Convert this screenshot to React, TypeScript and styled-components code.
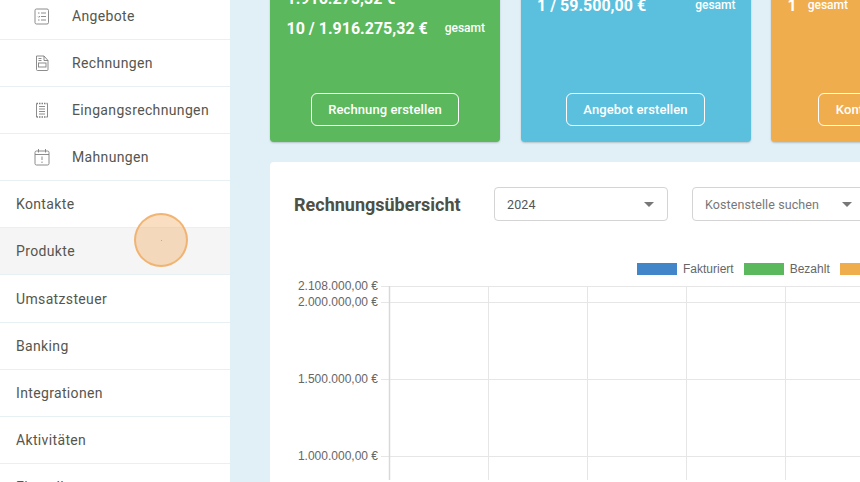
import React from 'react';
import styled, { createGlobalStyle } from 'styled-components';

const GlobalStyle = createGlobalStyle`
  html, body {
    margin: 0;
    padding: 0;
    overflow: hidden;
    background: #e1f0f7;
    font-family: Roboto, 'Liberation Sans', sans-serif;
  }
`;

const iconProps = {
  width: 18,
  height: 18,
  viewBox: '0 0 18 18',
  fill: 'none',
  stroke: '#808080',
  strokeWidth: 0.9,
};

const OffersIcon = () => (
  <svg {...iconProps}>
    <rect x="2" y="2" width="13.500" height="15" rx="1.500" />
    <path d="M5 6h1.500M8 6h5M5 9.500l.8.8L7 9M8 9.500h5M5 13h1.500M8 13h5" />
  </svg>
);

const InvoiceIcon = () => (
  <svg {...iconProps}>
    <path d="M3.500 2h7.500l4 4.500v9a1 1 0 0 1-1 1H4.500a1 1 0 0 1-1-1z" />
    <path d="M11 2v4.500h4M5.500 4.500h3M5.500 6.500h3" />
    <rect x="5.500" y="9" width="7.500" height="4" />
  </svg>
);

const IncomingIcon = () => (
  <svg {...iconProps}>
    <path
      d="M3.500 2.500h11M3.500 16h11"
      strokeDasharray="1.500 1"
      strokeWidth="1.400"
    />
    <path d="M3.500 2.500v13.500M14.500 2.500v13.500M6 5.500h6M6 8h6M6 10.500h6M6 13h6" />
  </svg>
);

const ReminderIcon = () => (
  <svg {...iconProps}>
    <rect x="2" y="3" width="14" height="14" rx="1.500" />
    <path d="M2 6.500h14M5.500 1v3.500M12.500 1v3.500M9 8.500v3.500M9 13.500v1.500" />
  </svg>
);

const subItems = [
  { label: 'Angebote', icon: <OffersIcon /> },
  { label: 'Rechnungen', icon: <InvoiceIcon /> },
  { label: 'Eingangsrechnungen', icon: <IncomingIcon /> },
  { label: 'Mahnungen', icon: <ReminderIcon /> },
];

const mainItems = ['Kontakte', 'Produkte', 'Umsatzsteuer', 'Banking', 'Integrationen', 'Aktivitäten'];

const yTicks = [
  { label: '2.108.000,00 €', y: 26.500 },
  { label: '2.000.000,00 €', y: 42.500 },
  { label: '1.500.000,00 €', y: 119.500 },
  { label: '1.000.000,00 €', y: 196.500 },
];

const xGrid = [119.500, 218.500, 317.500, 416.500, 515.500];

const App = () => {
  return (
    <Page>
      <GlobalStyle />
      <Sidebar>
        {subItems.map((oItem) => (
          <NavRow key={oItem.label} $sub>
            <NavIcon>{oItem.icon}</NavIcon>
            {oItem.label}
          </NavRow>
        ))}
        {mainItems.map((sItem) => (
          <NavRow key={sItem} $active={sItem === 'Produkte'}>
            {sItem}
          </NavRow>
        ))}
        <NavRow>
          Einstellungen
          <Chevron />
        </NavRow>
      </Sidebar>

      <Main>
        <Cards>
          <Card $color="#5cb85c">
            <Stats $top={13}>
              <StatRow>
                <Amount>1.916.275,32 €</Amount>
              </StatRow>
              <StatRow>
                <Amount>10 / 1.916.275,32 €</Amount>
                <Unit>gesamt</Unit>
              </StatRow>
            </Stats>
            <CardButton>Rechnung erstellen</CardButton>
          </Card>
          <Card $color="#5bc0de">
            <Stats $top={20}>
              <StatRow>
                <Amount>1 / 59.500,00 €</Amount>
                <Unit>gesamt</Unit>
              </StatRow>
            </Stats>
            <CardButton>Angebot erstellen</CardButton>
          </Card>
          <Card $color="#f0ad4e">
            <Stats $top={20}>
              <StatRow $compact>
                <Amount>1</Amount>
                <Unit>gesamt</Unit>
              </StatRow>
            </Stats>
            <CardButton>Kontakt erstellen</CardButton>
          </Card>
        </Cards>

        <Panel>
          <PanelHeader>
            <PanelTitle>Rechnungsübersicht</PanelTitle>
            <Select $width={174}>
              <SelectValue $dark>2024</SelectValue>
              <Caret />
            </Select>
            <Select $width={174}>
              <SelectValue>Kostenstelle suchen</SelectValue>
              <Caret />
            </Select>
          </PanelHeader>

          <Legend>
            <LegendItem>
              <Swatch $color="#4286c9" />
              Fakturiert
            </LegendItem>
            <LegendItem>
              <Swatch $color="#5cb85c" />
              Bezahlt
            </LegendItem>
            <LegendItem>
              <Swatch $color="#f0ad4e" />
              Offen
            </LegendItem>
          </Legend>

          <Chart width="590" height="220">
            {yTicks.map((oTick) => (
              <g key={oTick.label}>
                <line x1="111" x2="590" y1={oTick.y} y2={oTick.y} stroke="#e6e6e6" />
                <ChartLabel x="108" y={oTick.y + 3.500} textAnchor="end">
                  {oTick.label}
                </ChartLabel>
              </g>
            ))}
            {xGrid.map((nX, i) => (
              <line
                key={nX}
                x1={nX}
                x2={nX}
                y1="26"
                y2="220"
                stroke={i === 0 ? '#d8d8d8' : '#e6e6e6'}
                strokeWidth={i === 0 ? 1.500 : 1}
              />
            ))}
          </Chart>
        </Panel>
      </Main>

      <Cursor>
        <CursorDot />
      </Cursor>
    </Page>
  );
};

const Page = styled.div`
  position: relative;
  display: flex;
  width: 860px;
  height: 482px;
  overflow: hidden;
  background: #e1f0f7;
`;

const Sidebar = styled.nav`
  flex: 0 0 230px;
  height: 520px;
  margin-top: -7.100px;
  background: #fff;
`;

const NavRow = styled.div<{ $sub?: boolean; $active?: boolean }>`
  box-sizing: border-box;
  display: flex;
  align-items: center;
  height: 47.100px;
  padding-left: ${(p) => (p.$sub ? '33px' : '16px')};
  border-bottom: 1px solid #e9f0f3;
  background: ${(p) => (p.$active ? '#f5f5f5' : '#fff')};
  color: #55564e;
  font-size: 14px;
  letter-spacing: 0.350px;
  white-space: nowrap;
`;

const NavIcon = styled.span`
  display: flex;
  width: 39px;
`;

const Chevron = styled.span`
  width: 5px;
  height: 5px;
  margin-left: auto;
  margin-right: 24px;
  border-top: 1px solid #888;
  border-right: 1px solid #888;
  transform: rotate(135deg);
`;

const Main = styled.main`
  flex: 1;
  min-width: 0;
  margin-top: -30px;
  padding-left: 40px;
`;

const Cards = styled.div`
  display: flex;
  gap: 20.500px;
`;

const Card = styled.section<{ $color: string }>`
  box-sizing: border-box;
  display: flex;
  flex: 0 0 230px;
  flex-direction: column;
  align-items: center;
  height: 172px;
  padding-bottom: 16px;
  border-radius: 4px;
  background: ${(p) => p.$color};
  box-shadow: 0 1px 2px rgba(0, 0, 0, 0.2);
  color: #fff;
`;

const Stats = styled.div<{ $top: number }>`
  box-sizing: border-box;
  width: 100%;
  padding: ${(p) => p.$top}px 15px 0 16.500px;
`;

const StatRow = styled.div<{ $compact?: boolean }>`
  display: flex;
  align-items: center;
  justify-content: ${(p) => (p.$compact ? 'flex-start' : 'space-between')};
  gap: ${(p) => (p.$compact ? '11px' : '0')};
  height: 30px;
`;

const Amount = styled.span`
  font-size: 16px;
  font-weight: 700;
`;

const Unit = styled.span`
  font-size: 12px;
  font-weight: 500;
`;

const CardButton = styled.button`
  box-sizing: border-box;
  height: 33px;
  margin-top: auto;
  padding: 0 16.500px;
  border: 1px solid #fff;
  border-radius: 6px;
  background: transparent;
  color: #fff;
  font-family: inherit;
  font-size: 13px;
  font-weight: 500;
  letter-spacing: 0.100px;
  white-space: nowrap;
`;

const Panel = styled.section`
  box-sizing: border-box;
  width: 620px;
  height: 340px;
  margin-top: 20px;
  padding-top: 25px;
  border-radius: 4px;
  background: #fff;
`;

const PanelHeader = styled.div`
  display: flex;
  align-items: center;
  gap: 24px;
  padding-left: 24px;
`;

const PanelTitle = styled.h2`
  width: 176px;
  margin: 0;
  color: #4d5044;
  font-size: 18px;
  font-weight: 700;
  white-space: nowrap;
`;

const Select = styled.div<{ $width: number }>`
  box-sizing: border-box;
  display: flex;
  flex: 0 0 ${(p) => p.$width}px;
  align-items: center;
  justify-content: space-between;
  height: 34px;
  padding: 0 13px 0 12px;
  border: 1px solid #d4d4d4;
  border-radius: 4px;
  background: #fff;
`;

const SelectValue = styled.span<{ $dark?: boolean }>`
  color: ${(p) => (p.$dark ? '#555' : '#777')};
  font-size: 12.500px;
  letter-spacing: 0.100px;
`;

const Caret = styled.span`
  width: 0;
  height: 0;
  border-top: 5px solid #777;
  border-right: 5px solid transparent;
  border-left: 5px solid transparent;
`;

const Legend = styled.div`
  display: flex;
  gap: 10px;
  height: 14px;
  margin-top: 41px;
  padding-left: 367px;
`;

const LegendItem = styled.div`
  display: flex;
  flex: none;
  align-items: center;
  gap: 6px;
  color: #666;
  font-family: 'Liberation Sans', sans-serif;
  font-size: 12px;
`;

const Swatch = styled.span<{ $color: string }>`
  width: 40px;
  height: 12px;
  background: ${(p) => p.$color};
`;

const Chart = styled.svg`
  display: block;
  margin-top: -16px;
`;

const ChartLabel = styled.text`
  fill: #666;
  font-family: 'Liberation Sans', sans-serif;
  font-size: 12px;
`;

const Cursor = styled.div`
  position: absolute;
  top: 213px;
  left: 134px;
  display: flex;
  align-items: center;
  justify-content: center;
  box-sizing: border-box;
  width: 54px;
  height: 54px;
  border: 2px solid rgba(240, 173, 100, 0.85);
  border-radius: 50%;
  background: rgba(240, 173, 100, 0.4);
`;

const CursorDot = styled.span`
  width: 1px;
  height: 1px;
  background: rgba(220, 130, 70, 0.7);
`;

export default App;
